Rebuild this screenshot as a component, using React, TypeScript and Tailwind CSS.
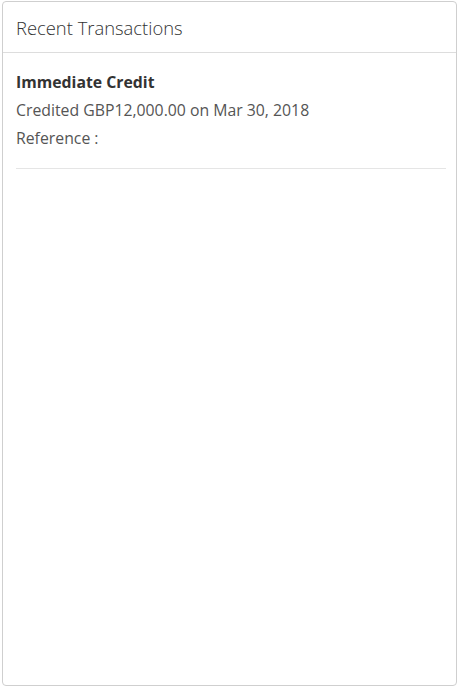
export default function App() {
  return (
    <div className="w-[460px] h-[687px] bg-white pl-[2px] pt-[1px]" style={{ fontFamily: '"Open Sans", "Noto Sans", sans-serif' }}>
      <div className="w-[455px] h-[685px] border border-[#cfcfcf] rounded-[4px] flex flex-col">
        {/* Header */}
        <div className="h-[51px] border-b border-[#dddddd] px-[13px] pt-[2px] flex items-center">
          <h3 className="text-[18.4px] font-light text-[#333333] leading-none">Recent Transactions</h3>
        </div>

        {/* Body */}
        <div className="pl-[13px] pr-[10px] pt-[15px]">
          <div className="pb-[16px] border-b border-[#e5e5e5]">
            <div className="text-[15.8px] font-bold text-[#333333] leading-[28px]">Immediate Credit</div>
            <div className="text-[15.8px] text-[#555555] leading-[28px]">Credited GBP12,000.00 on Mar 30, 2018</div>
            <div className="text-[15.8px] text-[#555555] leading-[28px]">Reference :</div>
          </div>
        </div>
      </div>
    </div>
  );
}
